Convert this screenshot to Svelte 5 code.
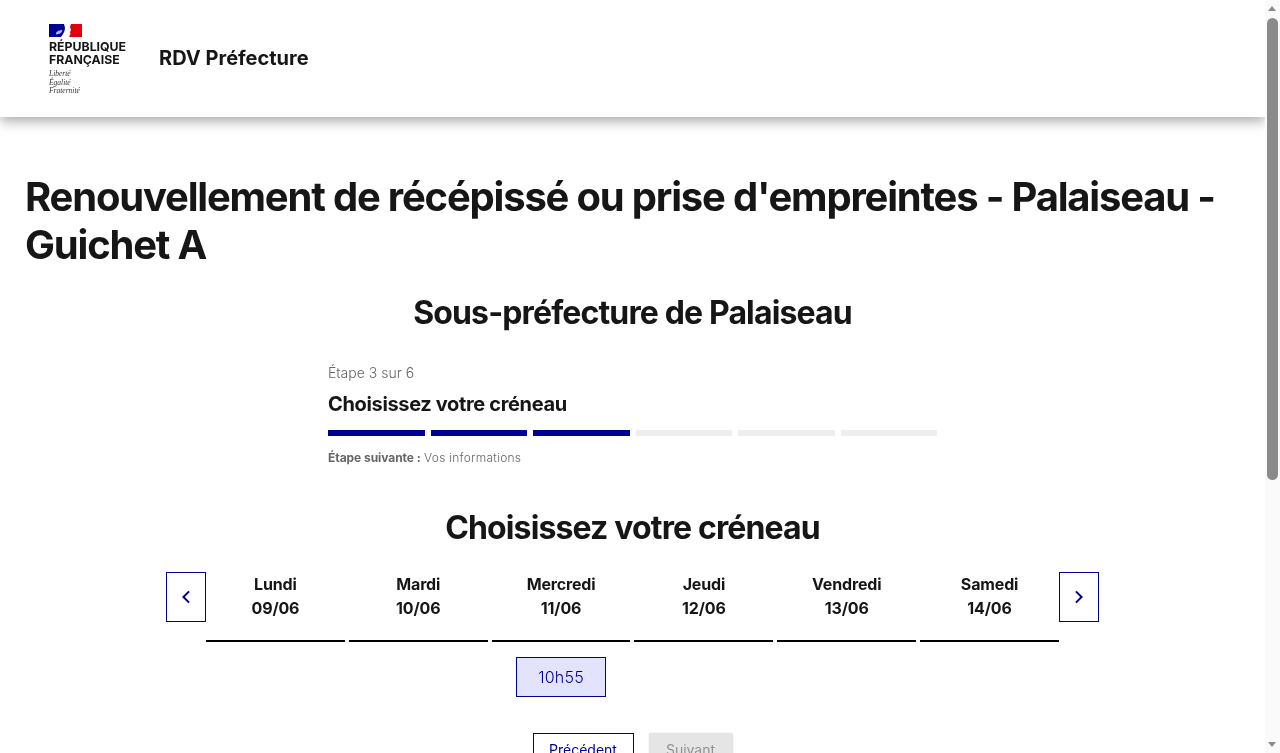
<script>
  const days = [
    { name: 'Lundi', date: '09/06', slots: [] },
    { name: 'Mardi', date: '10/06', slots: [] },
    { name: 'Mercredi', date: '11/06', slots: ['10h55'] },
    { name: 'Jeudi', date: '12/06', slots: [] },
    { name: 'Vendredi', date: '13/06', slots: [] },
    { name: 'Samedi', date: '14/06', slots: [] }
  ];
  const steps = [true, true, true, false, false, false];
</script>

<div class="shell">
  <div class="content">
    <header class="header">
      <div class="logo">
        <svg class="flag" width="33" height="13" viewBox="0 0 33 13" aria-hidden="true">
          <path d="M0 0h15l1 4-.5 3-1.500 3-2 3H0z" fill="#000091"></path>
          <path d="M22 0h11v13H20l1.500-3-.5-2 1-2-1-3z" fill="#e1000f"></path>
          <path d="M7.500 8c1.500-1.200 3.500-1.800 6-2-.5 2-1.800 3.500-3.500 4-1 .3-2 .1-3 .4.100-.9.000-1.700.500-2.400z" fill="#fff" opacity=".7"></path>
        </svg>
        <p class="brand">RÉPUBLIQUE<br />FRANÇAISE</p>
        <p class="motto">Liberté<br />Égalité<br />Fraternité</p>
      </div>
      <p class="service">RDV Préfecture</p>
    </header>

    <main class="page">
      <h1>Renouvellement de récépissé ou prise d'empreintes - Palaiseau - Guichet A</h1>
      <h2 class="place">Sous-préfecture de Palaiseau</h2>

      <section class="stepper">
        <p class="state">Étape 3 sur 6</p>
        <p class="step-title">Choisissez votre créneau</p>
        <div class="bars">
          {#each steps as done}
            <span class="bar" class:done></span>
          {/each}
        </div>
        <p class="next"><b>Étape suivante :</b> <span>Vos informations</span></p>
      </section>

      <h2 class="pick">Choisissez votre créneau</h2>

      <section class="calendar">
        <button class="nav" aria-label="Semaine précédente">
          <svg width="24" height="24" viewBox="0 0 24 24" fill="currentColor">
            <path d="M10.828 12l4.95 4.95-1.414 1.414L8 12l6.364-6.364 1.414 1.414z"></path>
          </svg>
        </button>
        <div class="days">
          {#each days as day}
            <div class="day">
              <div class="day-head">
                <span>{day.name}</span>
                <span>{day.date}</span>
              </div>
              <div class="slots">
                {#each day.slots as slot}
                  <button class="slot">{slot}</button>
                {/each}
              </div>
            </div>
          {/each}
        </div>
        <button class="nav" aria-label="Semaine suivante">
          <svg width="24" height="24" viewBox="0 0 24 24" fill="currentColor">
            <path d="M13.172 12l-4.95-4.95 1.414-1.414L16 12l-6.364 6.364-1.414-1.414z"></path>
          </svg>
        </button>
      </section>

      <div class="actions">
        <button class="btn prev">Précédent</button>
        <button class="btn disabled" disabled>Suivant</button>
      </div>
    </main>
  </div>

  <!-- page scrollbar -->
  <div class="scrollbar">
    <span class="arrow up"></span>
    <span class="thumb"></span>
    <span class="arrow down"></span>
  </div>
</div>

<style>
  :global(body) {
    font-family: Inter, "Noto Sans", sans-serif;
    color: #161616;
    background: #fff;
  }

  p, h1, h2 {
    margin: 0;
  }

  button {
    font-family: inherit;
    cursor: pointer;
  }

  .shell {
    display: flex;
    height: 100vh;
    overflow: hidden;
  }

  .content {
    flex: 1;
    min-width: 0;
    will-change: transform;
  }

  .scrollbar {
    flex: none;
    position: relative;
    width: 15px;
    background: #fafafa;
  }

  .thumb {
    position: absolute;
    top: 18px;
    left: 2px;
    width: 11px;
    height: 462px;
    background: #8a8a8a;
    border-radius: 6px;
  }

  .arrow {
    position: absolute;
    left: 3px;
    width: 0;
    height: 0;
    border-left: 4.500px solid transparent;
    border-right: 4.500px solid transparent;
  }

  .arrow.up {
    top: 6px;
    border-bottom: 5px solid #8a8a8a;
  }

  .arrow.down {
    bottom: 6px;
    border-top: 5px solid #8a8a8a;
  }

  .header {
    display: flex;
    align-items: center;
    gap: 33px;
    height: 117px;
    box-sizing: border-box;
    padding: 0 49px 1px;
    box-shadow: 0 4px 12px rgba(0, 0, 18, 0.35);
  }

  .logo {
    display: flex;
    flex-direction: column;
    margin-top: 4px;
  }

  .flag {
    display: block;
    margin-bottom: 3px;
  }

  .brand {
    font-size: 12.300px;
    font-weight: 700;
    line-height: 13px;
  }

  .motto {
    margin-top: 4px;
    font-family: "Liberation Serif", serif;
    font-style: italic;
    font-size: 7.500px;
    line-height: 8.500px;
    color: #333;
  }

  .service {
    font-size: 20px;
    font-weight: 700;
  }

  .page {
    padding: 56px 25px 0 25px;
  }

  h1 {
    font-size: 40px;
    line-height: 48px;
    font-weight: 700;
    letter-spacing: -0.03em;
  }

  h2 {
    font-size: 32px;
    line-height: 40px;
    font-weight: 700;
    letter-spacing: -0.027em;
    text-align: center;
  }

  .place {
    margin-top: 24px;
  }

  .stepper {
    width: 609px;
    margin: 28px auto 0;
  }

  .state {
    font-size: 14px;
    line-height: 24px;
    font-weight: 300;
    color: #666;
  }

  .step-title {
    margin-top: 5px;
    font-size: 20px;
    line-height: 28px;
    font-weight: 700;
    letter-spacing: -0.35px;
  }

  .bars {
    display: flex;
    gap: 6px;
    margin-top: 12px;
  }

  .bar {
    flex: 1;
    height: 6px;
    background: #eee;
  }

  .bar.done {
    background: #000091;
  }

  .next {
    margin-top: 12px;
    font-size: 12px;
    line-height: 20px;
    font-weight: 300;
    color: #666;
  }

  .next b {
    font-weight: 700;
    letter-spacing: -0.05px;
  }

  .next span {
    letter-spacing: 0.25px;
  }

  .pick {
    margin-top: 40px;
  }

  .calendar {
    display: flex;
    align-items: flex-start;
    justify-content: center;
    margin-top: 24px;
  }

  .nav {
    display: flex;
    align-items: center;
    justify-content: center;
    width: 40px;
    height: 50px;
    padding: 0;
    background: #fff;
    border: 1px solid #000091;
    border-radius: 0;
    color: #000091;
  }

  .days {
    display: flex;
    gap: 4px;
    width: 853px;
  }

  .day {
    flex: 1;
    text-align: center;
  }

  .day-head {
    display: flex;
    flex-direction: column;
    height: 70px;
    box-sizing: border-box;
    border-bottom: 2px solid #000;
    font-size: 16px;
    line-height: 24px;
    font-weight: 700;
    letter-spacing: -0.15px;
  }

  .slots {
    padding-top: 15px;
  }

  .slot {
    width: 90px;
    height: 40px;
    padding: 0;
    background: #e3e3fd;
    border: 1px solid #000091;
    border-radius: 0;
    color: #000091;
    font-size: 16px;
    font-weight: 300;
    letter-spacing: 0.2px;
  }

  .actions {
    display: flex;
    justify-content: center;
    gap: 15px;
    margin-top: 36px;
  }

  .btn {
    height: 32px;
    padding: 0 15px;
    background: #fff;
    border: 1px solid #000091;
    border-radius: 0;
    color: #000091;
    font-size: 14px;
  }

  .btn.prev {
    min-width: 101px;
  }

  .btn.disabled {
    width: 84px;
    padding: 0;
    background: #e5e5e5;
    border: none;
    border-radius: 2px;
    color: #929292;
    box-shadow: 0 0 2px rgba(0, 0, 0, 0.12);
    cursor: default;
  }
</style>
